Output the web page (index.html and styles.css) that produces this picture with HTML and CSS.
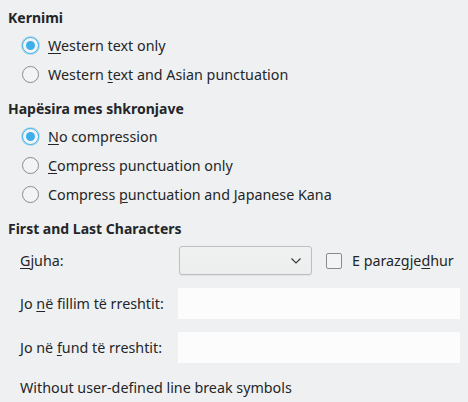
FILE: index.html
```html
<!DOCTYPE html>
<html>
<head>
<meta charset="utf-8">
<link rel="stylesheet" href="styles.css">
</head>
<body>
<div class="page">
  <section class="group">
    <div class="heading">Kernimi</div>
    <div class="options">
      <div class="option"><span class="radio checked"></span><span><u>W</u>estern text only</span></div>
      <div class="option"><span class="radio"></span><span>Western <u>t</u>ext and Asian punctuation</span></div>
    </div>
  </section>
  <section class="group">
    <div class="heading">Hapësira mes shkronjave</div>
    <div class="options">
      <div class="option"><span class="radio checked"></span><span><u>N</u>o compression</span></div>
      <div class="option"><span class="radio"></span><span><u>C</u>ompress punctuation only</span></div>
      <div class="option"><span class="radio"></span><span>Compress <u>p</u>unctuation and Japanese Kana</span></div>
    </div>
  </section>
  <section class="group">
    <div class="heading">First and Last Characters</div>
    <div class="form">
      <div class="label"><u>G</u>juha:</div>
      <div class="combo-row">
        <div class="combo">
          <svg class="chev" width="10" height="6" viewBox="0 0 10 6"><path d="M0.5 0.5 L5 5 L9.5 0.5" fill="none" stroke="#31363b" stroke-width="1.1"/></svg>
        </div>
        <span class="check"></span>
        <span>E parazgje<u>d</u>hur</span>
      </div>
      <div class="label">Jo <u>n</u>ë fillim të rreshtit:</div>
      <div class="field"></div>
      <div class="label">Jo në <u>f</u>und të rreshtit:</div>
      <div class="field"></div>
      <div class="note">Without user-defined line break symbols</div>
    </div>
  </section>
</div>
</body>
</html>
```

FILE: styles.css
```css
html, body {
  margin: 0;
  padding: 0;
  background: #eff0f1;
}
body {
  font-family: "Noto Sans", "DejaVu Sans", sans-serif;
  font-size: 14.3px;
  color: #232629;
}
u {
  text-decoration-thickness: 1px;
  text-underline-offset: 2px;
}
.page {
  padding: 8px 8px 0 8px;
  display: flex;
  flex-direction: column;
  gap: 10px;
}
.heading {
  font-weight: bold;
  font-size: 14px;
  height: 20px;
  line-height: 20px;
}
.options {
  margin-top: 3px;
  padding-left: 14px;
  display: flex;
  flex-direction: column;
}
.option {
  height: 29px;
  display: flex;
  align-items: center;
  gap: 9px;
}
.radio {
  width: 15px;
  height: 15px;
  border-radius: 50%;
  border: 1px solid #898b8d;
  background: #f3f4f4;
  position: relative;
  flex: none;
}
.radio.checked {
  border-color: #3daee9;
  box-shadow: 0 0 0 1px rgba(61,174,233,0.35);
}
.radio.checked::after {
  content: "";
  position: absolute;
  left: 3px;
  top: 3px;
  width: 9px;
  height: 9px;
  border-radius: 50%;
  background: #3daee9;
}
.form {
  margin-top: 7px;
  padding-left: 12px;
  display: grid;
  grid-template-columns: 158px 282px;
  align-items: center;
  row-gap: 13px;
}
.combo-row {
  display: flex;
  align-items: center;
}
.combo {
  width: 121px;
  height: 27px;
  border: 1px solid #bcbebf;
  border-radius: 3px;
  background: linear-gradient(#f0f1f1, #eceded);
  box-shadow: 0 1px 1px rgba(0,0,0,0.06);
  display: flex;
  align-items: center;
  justify-content: flex-end;
  padding-right: 10px;
  margin-left: 1px;
  margin-right: 14px;
}
.check {
  width: 14px;
  height: 14px;
  border: 1px solid #898b8d;
  border-radius: 2px;
  background: #f3f4f4;
  margin-right: 10px;
  flex: none;
}
.field {
  height: 31px;
  background: #fcfcfc;
}
.note {
  grid-column: 1 / 3;
  height: 24px;
  line-height: 24px;
}
```
